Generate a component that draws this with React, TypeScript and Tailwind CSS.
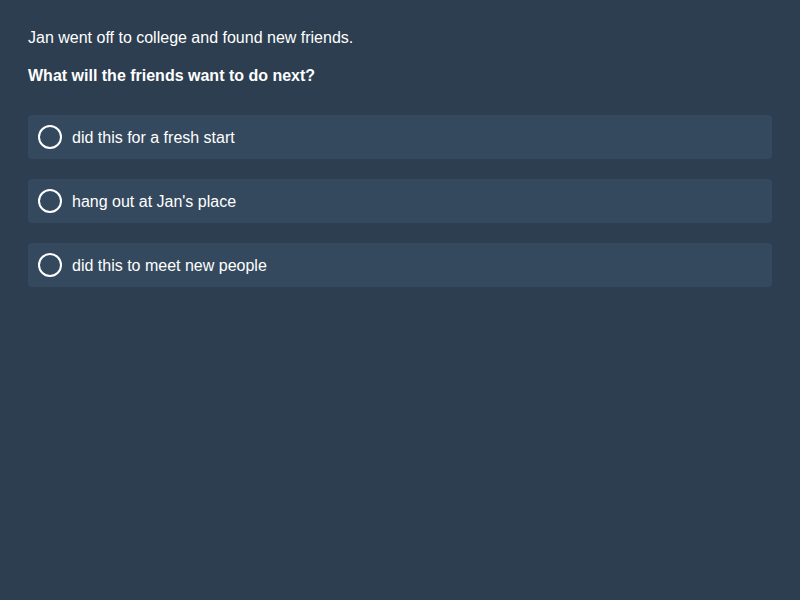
export default function App() {
  const opts = ["did this for a fresh start", "hang out at Jan's place", "did this to meet new people"];
  return (
    <div className="w-[800px] h-[600px] bg-[#2c3e50] text-white px-7 pt-7" style={{ fontFamily: '"Liberation Sans", Arial, sans-serif' }}>
      <p className="text-[16px] leading-[20px]">Jan went off to college and found new friends.</p>
      <p className="text-[16px] leading-[20px] font-bold mt-[18px]">What will the friends want to do next?</p>
      <div className="mt-[29px] flex flex-col gap-[20px]">
        {opts.map((o) => (
          <div key={o} className="h-[44px] bg-[#34495e] rounded-[4px] flex items-center px-[10px] gap-[10px]">
            <div className="w-[24px] h-[24px] rounded-full border-2 border-white" />
            <span className="text-[16px] leading-[20px] pt-[2px]">{o}</span>
          </div>
        ))}
      </div>
    </div>
  );
}
